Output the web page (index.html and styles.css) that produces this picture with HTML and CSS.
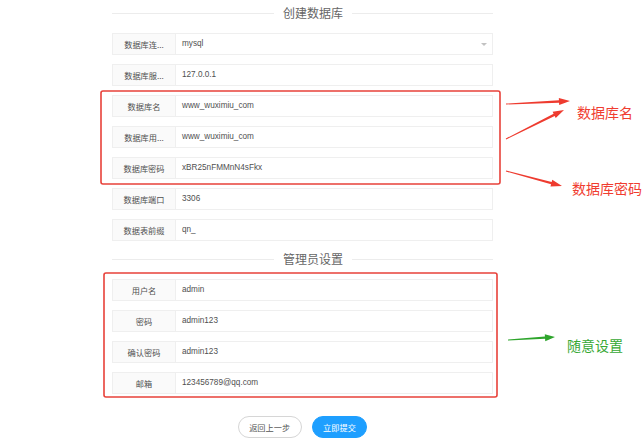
FILE: index.html
```html
<!DOCTYPE html>
<html lang="zh-CN">
<head>
<meta charset="utf-8">
<title>安装</title>
<link rel="stylesheet" href="styles.css">
</head>
<body>
<div class="page">
  <form class="form">
    <div class="legend"><span class="legend-text">创建数据库</span></div>
    <div class="rows">
      <div class="item"><div class="lbl">数据库连...</div><div class="field select"><span>mysql</span><i class="caret"></i></div></div>
      <div class="item"><div class="lbl">数据库服...</div><div class="field">127.0.0.1</div></div>
      <div class="item"><div class="lbl">数据库名</div><div class="field">www_wuximiu_com</div></div>
      <div class="item"><div class="lbl">数据库用...</div><div class="field">www_wuximiu_com</div></div>
      <div class="item"><div class="lbl">数据库密码</div><div class="field">xBR25nFMMnN4sFkx</div></div>
      <div class="item"><div class="lbl">数据库端口</div><div class="field">3306</div></div>
      <div class="item"><div class="lbl">数据表前缀</div><div class="field">qn_</div></div>
    </div>
    <div class="legend legend-2"><span class="legend-text">管理员设置</span></div>
    <div class="rows">
      <div class="item"><div class="lbl">用户名</div><div class="field">admin</div></div>
      <div class="item"><div class="lbl">密码</div><div class="field">admin123</div></div>
      <div class="item"><div class="lbl">确认密码</div><div class="field">admin123</div></div>
      <div class="item"><div class="lbl">邮箱</div><div class="field">123456789@qq.com</div></div>
    </div>
    <div class="actions">
      <button type="button" class="btn btn-plain">返回上一步</button>
      <button type="button" class="btn btn-blue">立即提交</button>
    </div>
  </form>

  <svg class="marks" width="644" height="445" viewBox="0 0 644 445" xmlns="http://www.w3.org/2000/svg">
    <rect x="101" y="91" width="399" height="93" rx="2" fill="none" stroke="#e8413a" stroke-width="1.6"/>
    <rect x="104" y="273" width="393" height="124" rx="2" fill="none" stroke="#e8413a" stroke-width="1.6"/>
    <polygon fill="#ee3b2f" points="506.02,104.5 559.06,102.7 559.16,105.0 570,101 558.84,98.0 558.94,100.3 505.98,103.5"/>
    <polygon fill="#ee3b2f" points="506.22,139.45 554.70,115.99 555.72,118.05 564,110 552.60,111.79 553.62,113.85 505.78,138.55"/>
    <polygon fill="#ee3b2f" points="505.87,171.48 551.06,184.31 550.46,186.53 562,186 552.28,179.77 551.68,181.99 506.13,170.52"/>
    <polygon fill="#2ea52c" points="508.03,340.5 545.10,338.84 545.24,341.13 555,337 544.80,334.15 544.94,336.44 507.97,339.5"/>
  </svg>
  <div class="note note-red note-1">数据库名</div>
  <div class="note note-red note-2">数据库密码</div>
  <div class="note note-green note-3">随意设置</div>
</div>
</body>
</html>
```
FILE: styles.css
```css
* { box-sizing: border-box; }
html, body { margin: 0; padding: 0; background: #fff; }
body {
  font-family: "Liberation Sans", "Noto Sans CJK SC", sans-serif;
  color: #444;
}
.page {
  position: relative;
  width: 644px;
  height: 445px;
  overflow: hidden;
}
.form {
  margin: 0 0 0 112px;
  width: 381px;
}
.legend {
  display: flex;
  align-items: center;
  height: 26px;
}
.legend::before {
  content: "";
  width: 162px;
  border-top: 1px solid #ececec;
}
.legend::after {
  content: "";
  flex: 1;
  border-top: 1px solid #ececec;
}
.legend-text {
  padding: 0 9px;
  font-family: "Noto Sans CJK SC", sans-serif;
  font-size: 12px;
  line-height: 16px;
  color: #666;
}
.legend-2 { margin-top: 5px; }
.rows {
  display: flex;
  flex-direction: column;
  gap: 9px;
  padding-top: 7px;
}
.item {
  display: flex;
  height: 22px;
}
.lbl {
  width: 63px;
  flex: none;
  background: #fafafa;
  border: 1px solid #efefef;
  border-right: none;
  font-family: "Noto Sans CJK SC", sans-serif;
  font-size: 8.2px;
  line-height: 20px;
  text-align: center;
  color: #505050;
  white-space: nowrap;
  overflow: hidden;
}
.field {
  flex: 1;
  border: 1px solid #efefef;
  padding: 0 6px;
  font-size: 8.2px;
  line-height: 20px;
  color: #505050;
  white-space: nowrap;
}
.select {
  display: flex;
  align-items: center;
  justify-content: space-between;
  padding-right: 5px;
}
.caret {
  width: 0;
  height: 0;
  margin-top: 1px;
  border-top: 3.5px solid #c2c2c2;
  border-left: 3.5px solid transparent;
  border-right: 3.5px solid transparent;
}
.actions {
  display: flex;
  justify-content: center;
  gap: 10px;
  margin-top: 22px;
}
.btn {
  height: 22px;
  padding: 0 10.5px;
  border-radius: 11px;
  font-family: "Noto Sans CJK SC", sans-serif;
  font-size: 8.2px;
  line-height: 20px;
  cursor: pointer;
}
.btn-plain {
  background: #fff;
  border: 1px solid #d6d6d6;
  color: #555;
}
.btn-blue {
  background: #1e9fff;
  border: 1px solid #1e9fff;
  color: #fff;
}
.marks {
  position: absolute;
  left: 0;
  top: 0;
  pointer-events: none;
}
.note {
  position: absolute;
  font-family: "Noto Sans CJK SC", sans-serif;
  font-size: 14px;
  line-height: 20px;
  white-space: nowrap;
}
.note-red { color: #f03d30; }
.note-green { color: #36a834; }
.note-1 { left: 577px; top: 102px; }
.note-2 { left: 572px; top: 178px; }
.note-3 { left: 567px; top: 335px; }
```
